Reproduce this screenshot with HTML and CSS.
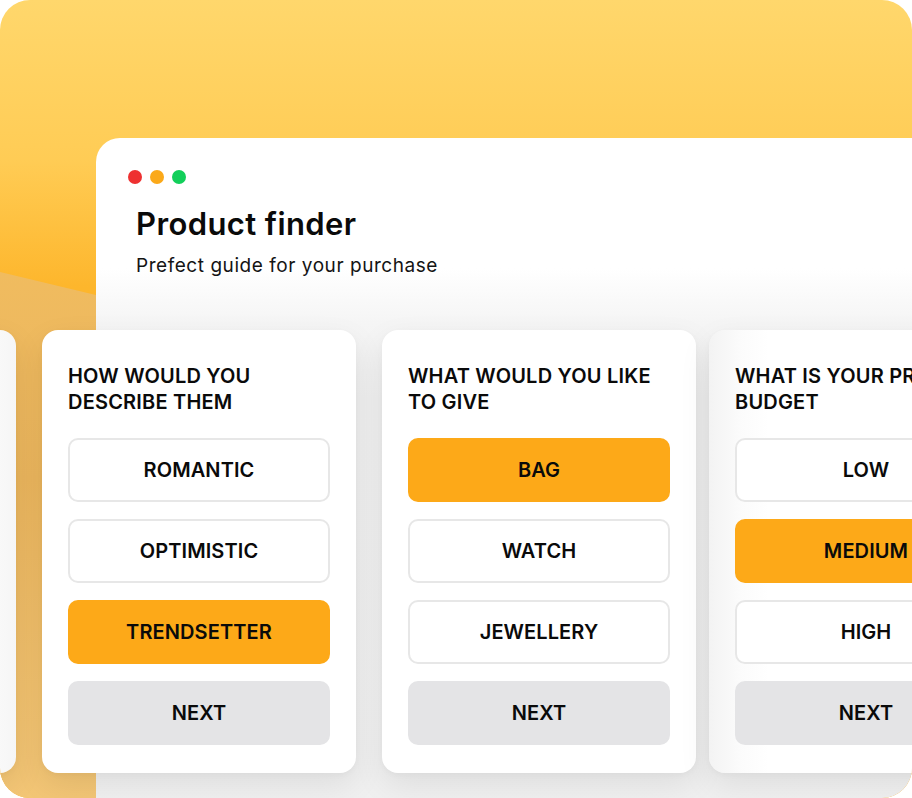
FILE: index.html
```html
<!DOCTYPE html>
<html lang="en">
<head>
<meta charset="utf-8">
<title>Product finder</title>
<link rel="stylesheet" href="styles.css">
</head>
<body>
<div class="stage">
  <div class="window">
    <div class="window-head">
      <div class="dots">
        <span class="dot dot-red"></span>
        <span class="dot dot-orange"></span>
        <span class="dot dot-green"></span>
      </div>
      <h1 class="title">Product finder</h1>
      <p class="subtitle">Prefect guide for your purchase</p>
    </div>
    <div class="cards">
      <section class="card card-prev" aria-hidden="true"></section>
      <section class="card">
        <h2 class="card-title">HOW WOULD YOU<br>DESCRIBE THEM</h2>
        <div class="options">
          <div class="opt">ROMANTIC</div>
          <div class="opt">OPTIMISTIC</div>
          <div class="opt opt-active">TRENDSETTER</div>
          <div class="opt opt-next">NEXT</div>
        </div>
      </section>
      <section class="card">
        <h2 class="card-title">WHAT WOULD YOU LIKE<br>TO GIVE</h2>
        <div class="options">
          <div class="opt opt-active">BAG</div>
          <div class="opt">WATCH</div>
          <div class="opt">JEWELLERY</div>
          <div class="opt opt-next">NEXT</div>
        </div>
      </section>
      <section class="card card-following">
        <h2 class="card-title">WHAT IS YOUR PRICE<br>BUDGET</h2>
        <div class="options">
          <div class="opt">LOW</div>
          <div class="opt opt-active">MEDIUM</div>
          <div class="opt">HIGH</div>
          <div class="opt opt-next">NEXT</div>
        </div>
      </section>
    </div>
  </div>
</div>
</body>
</html>
```

FILE: styles.css
```css
* { box-sizing: border-box; }

html, body {
  margin: 0;
  padding: 0;
  background: #ffffff;
  width: 912px;
  height: 798px;
  overflow: hidden;
}

body {
  font-family: "Inter", "Open Sans", sans-serif;
  color: #0b0b0b;
}

.stage {
  position: relative;
  width: 912px;
  height: 798px;
  border-radius: 30px;
  overflow: hidden;
  padding: 138px 0 0 96px;
  background: linear-gradient(180deg, #ffd76c 0%, #ffcc55 20%, #fdb62c 36%, #fcae22 60%, #f8ae2a 100%);
}

.stage::before {
  content: "";
  position: absolute;
  inset: 0;
  background: linear-gradient(180deg, #f8c462 0%, #eab55d 60%, #f3c676 100%);
  clip-path: polygon(0 272px, 200px 320px, 200px 100%, 0 100%);
}

.window {
  position: relative;
  width: 900px;
  height: 720px;
  border-radius: 24px 24px 0 0;
  background: linear-gradient(180deg, #ffffff 0px, #ffffff 130px, #f5f5f5 185px, #efefef 260px, #f0f0f0 100%);
}

.window-head {
  height: 192px;
  padding: 32px 0 0 40px;
}

.dots {
  display: flex;
  gap: 8px;
  margin-left: -8px;
}

.dot {
  width: 14px;
  height: 14px;
  border-radius: 50%;
}

.dot-red { background: #ee3131; }
.dot-orange { background: #fba919; }
.dot-green { background: #12cf5a; }

.title {
  margin: 22px 0 0;
  font-size: 31px;
  line-height: 36px;
  font-weight: 600;
  letter-spacing: 0.4px;
  color: #0a0a0a;
}

.subtitle {
  margin: 12px 0 0;
  font-size: 19px;
  line-height: 24px;
  font-weight: 400;
  letter-spacing: 0.55px;
  color: #141414;
}

.cards {
  display: flex;
  gap: 26px;
  margin-left: -394px;
}

.card {
  flex: 0 0 314px;
  height: 443px;
  background: #ffffff;
  border-radius: 16px;
  padding: 33px 26px 28px;
  box-shadow: 0 12px 32px rgba(0, 0, 0, 0.08), 0 2px 6px rgba(0, 0, 0, 0.03);
}

.card-following {
  margin-left: -13px;
  background: linear-gradient(90deg, #f3f3f3 0px, #fbfbfb 30px, #ffffff 60px);
}

.card-prev {
  background: linear-gradient(90deg, #ffffff 0, #ffffff 260px, #f6f6f6 314px);
}

.card-title {
  margin: 0;
  font-size: 20px;
  line-height: 26px;
  font-weight: 600;
  letter-spacing: 0.2px;
  color: #0a0a0a;
  white-space: nowrap;
}

.options {
  display: flex;
  flex-direction: column;
  gap: 17px;
  margin-top: 23px;
}

.opt {
  height: 64px;
  border: 2px solid #e7e7e7;
  border-radius: 10px;
  background: #ffffff;
  display: flex;
  align-items: center;
  justify-content: center;
  font-size: 20px;
  font-weight: 600;
  letter-spacing: 0.1px;
  color: #0a0a0a;
}

.opt-active {
  background: #fda918;
  border-color: #fda918;
}

.opt-next {
  background: #e4e4e6;
  border-color: #e4e4e6;
}
```
